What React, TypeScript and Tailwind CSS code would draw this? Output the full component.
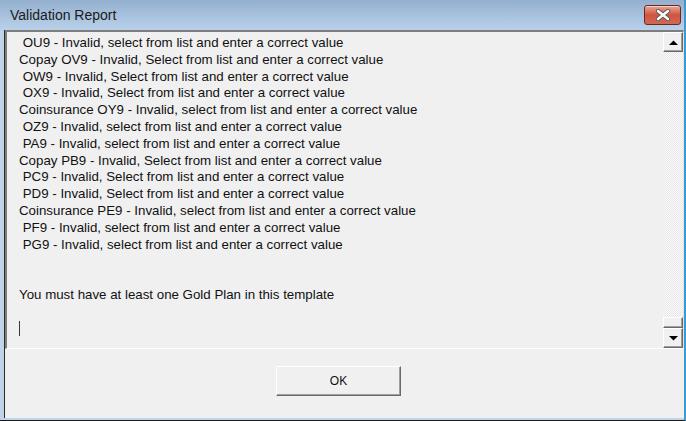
import React from "react";

const lines = [
  " OU9 - Invalid, select from list and enter a correct value",
  "Copay OV9 - Invalid, Select from list and enter a correct value",
  " OW9 - Invalid, Select from list and enter a correct value",
  " OX9 - Invalid, Select from list and enter a correct value",
  "Coinsurance OY9 - Invalid, select from list and enter a correct value",
  " OZ9 - Invalid, select from list and enter a correct value",
  " PA9 - Invalid, select from list and enter a correct value",
  "Copay PB9 - Invalid, Select from list and enter a correct value",
  " PC9 - Invalid, Select from list and enter a correct value",
  " PD9 - Invalid, Select from list and enter a correct value",
  "Coinsurance PE9 - Invalid, select from list and enter a correct value",
  " PF9 - Invalid, select from list and enter a correct value",
  " PG9 - Invalid, select from list and enter a correct value",
  "",
  "",
  "You must have at least one Gold Plan in this template",
  "",
];

function CloseButton() {
  return (
    <button className="w-[37px] h-[20px] rounded-[3px] border border-[#6b2a20] bg-gradient-to-b from-[#e9a597] via-[#d0533e] to-[#cf6a58] flex items-center justify-center shadow-[inset_0_1px_0_rgba(255,255,255,0.5)]">
      <svg width="16" height="12" viewBox="0 0 16 12">
        <path d="M3 2 L13 10 M13 2 L3 10" stroke="#5a5a5a" strokeWidth="4.2" strokeLinecap="round" />
        <path d="M3 2 L13 10 M13 2 L3 10" stroke="#ffffff" strokeWidth="2.4" strokeLinecap="round" />
      </svg>
    </button>
  );
}

function ScrollArrow({ dir }: { dir: "up" | "down" }) {
  return (
    <div className="h-[20px] w-full bg-[#f0f0f0] border border-t-white border-l-white border-r-[#696969] border-b-[#696969] shadow-[inset_-1px_-1px_0_#a0a0a0] flex items-center justify-center">
      <svg width="9" height="5" viewBox="0 0 9 5">
        {dir === "up" ? (
          <path d="M0 5 L4.5 0.5 L9 5 Z" fill="#000" />
        ) : (
          <path d="M0 0 L4.5 4.5 L9 0 Z" fill="#000" />
        )}
      </svg>
    </div>
  );
}

export default function App() {
  return (
    <div className="w-[686px] h-[421px] flex flex-col bg-[#bfd4ea] border-r-2 border-r-[#3d9ad1] border-b border-b-[#1a1a1a] font-['Liberation_Sans',Arial,sans-serif] text-[13.3px] text-[#111]">
      {/* title bar */}
      <div className="h-[30px] shrink-0 flex items-start justify-between bg-gradient-to-b from-[#94b0cf] to-[#bad1ea] pl-[10px] pr-[3px]">
        <span className="mt-[7px] text-[14px] leading-[17px] text-[#1b1b1b]">Validation Report</span>
        <div className="mt-[5px]">
          <CloseButton />
        </div>
      </div>

      {/* client area */}
      <div className="flex-1 flex flex-col ml-[4px] mb-[2px] border-l border-l-[#2a2a2a] bg-[#f0f0f0]">
        <div className="h-[319px] flex border-t-2 border-l-2 border-t-[#7d7d7d] border-l-[#7d7d7d] border-r border-b border-r-[#e3e3e3] border-b-white">
          <div className="flex-1 pl-[12px] pt-[3px] leading-[16.8px] whitespace-pre">
            {lines.map((line, i) => (
              <div key={i} className="h-[16.8px]">
                {line}
              </div>
            ))}
            <div className="h-[16.8px] flex items-center">
              <span className="inline-block w-px h-[15px] bg-[#3a3a3a]" />
            </div>
          </div>
          <div className="w-[20px] flex flex-col">
            <ScrollArrow dir="up" />
            <div className="flex-1 bg-[repeating-conic-gradient(#e6e6e6_0_25%,#fbfbfb_0_50%)] bg-[length:2px_2px]" />
            <div className="h-[11px] bg-[#f0f0f0] border border-t-white border-l-white border-r-[#696969] border-b-[#696969] shadow-[inset_-1px_-1px_0_#a0a0a0]" />
            <ScrollArrow dir="down" />
          </div>
        </div>

        <div className="flex-1 flex items-start justify-center pt-[17px] pr-[12px]">
          <button className="w-[125px] h-[30px] bg-[#f0f0f0] border border-t-white border-l-white border-r-[#696969] border-b-[#696969] shadow-[inset_-1px_-1px_0_#a0a0a0] text-[12px] text-[#111]">
            OK
          </button>
        </div>
      </div>
    </div>
  );
}
